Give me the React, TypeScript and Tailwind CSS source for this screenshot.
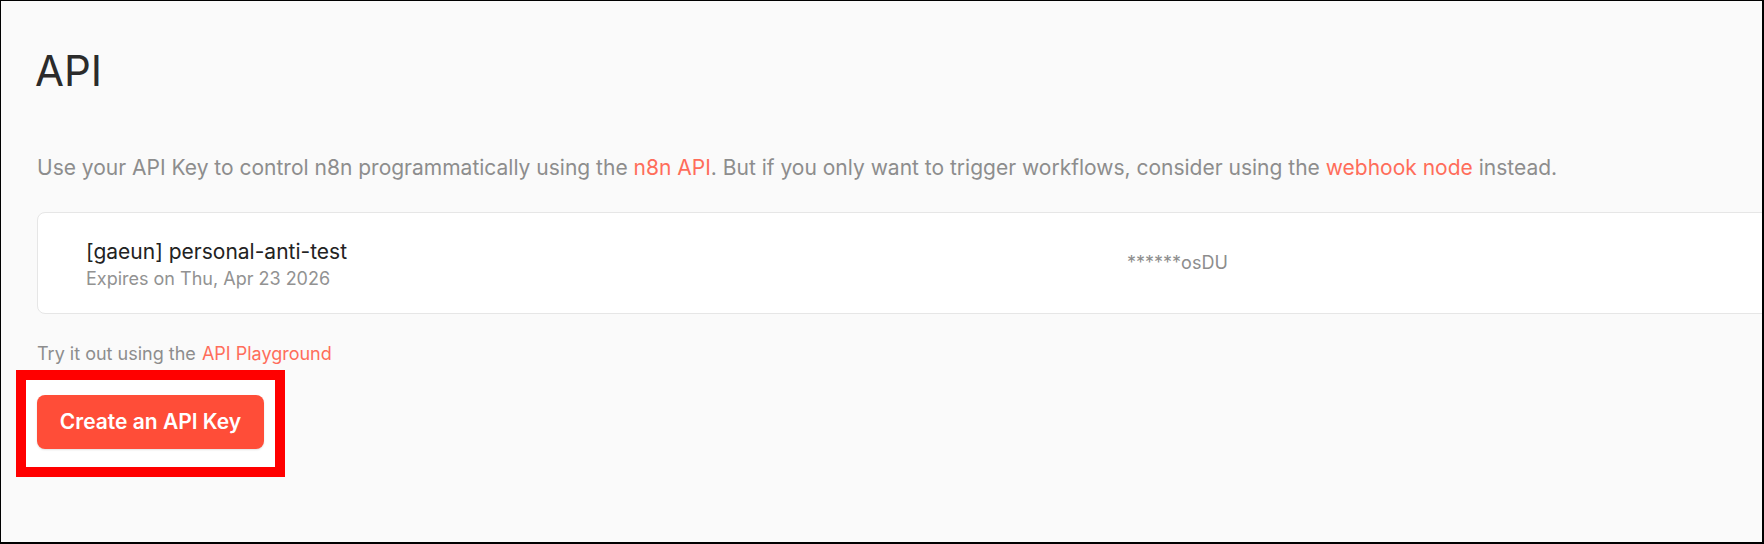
import React from 'react';

const App: React.FC = () => {
  return (
    <div
      className="w-[1764px] h-[544px] overflow-hidden bg-[#fafafa] border-l border-t border-r-2 border-b-2 border-black"
      style={{ fontFamily: 'Inter, "Liberation Sans", sans-serif' }}
    >
      <div className="pl-[36px] pt-[45px]">
        {/* Header */}
        <h1 className="-ml-[2px] text-[42px] leading-[50px] font-normal text-[#2b2b2b]">API</h1>

        {/* Descripción */}
        <p className="mt-[57px] text-[21px] leading-[30px] text-[#8d8d8d] whitespace-nowrap">
          Use your API Key to control n8n programmatically using the{' '}
          <a className="text-[#ff6d5a]">n8n API</a>. But if you only want to trigger workflows, consider using the{' '}
          <a className="text-[#ff6d5a]">webhook node</a> instead.
        </p>

        {/* Tarjeta de API key */}
        <div className="mt-[29px] w-[1800px] h-[102px] flex items-center bg-white border border-[#e6e6e6] rounded-[8px] pl-[48px]">
          <div className="w-[1041px] flex flex-col pt-[2px]">
            <span className="text-[21px] leading-[27px] text-[#222222]">[gaeun] personal-anti-test</span>
            <span className="mt-[2px] text-[18px] leading-[24px] text-[#929292]">Expires on Thu, Apr 23 2026</span>
          </div>
          <span className="text-[18px] leading-[24px] text-[#8d8d8d]">******osDU</span>
        </div>

        {/* Playground */}
        <p className="mt-[26px] text-[18px] leading-[27px] text-[#8d8d8d] whitespace-nowrap">
          Try it out using the <a className="ml-[1px] text-[#ff6d5a]">API Playground</a>
        </p>

        {/* Botón resaltado */}
        <div className="mt-[3px] -ml-[21px] w-[269px] h-[107px] border-[10px] border-[#ff0000] bg-white pl-[11px] pt-[15px]">
          <button className="w-[227px] h-[54px] rounded-[8px] bg-[#ff4d38] text-white text-[21px] font-semibold shadow-[0_1px_2px_rgba(0,0,0,0.12)]">
            Create an API Key
          </button>
        </div>
      </div>
    </div>
  );
};

export default App;
